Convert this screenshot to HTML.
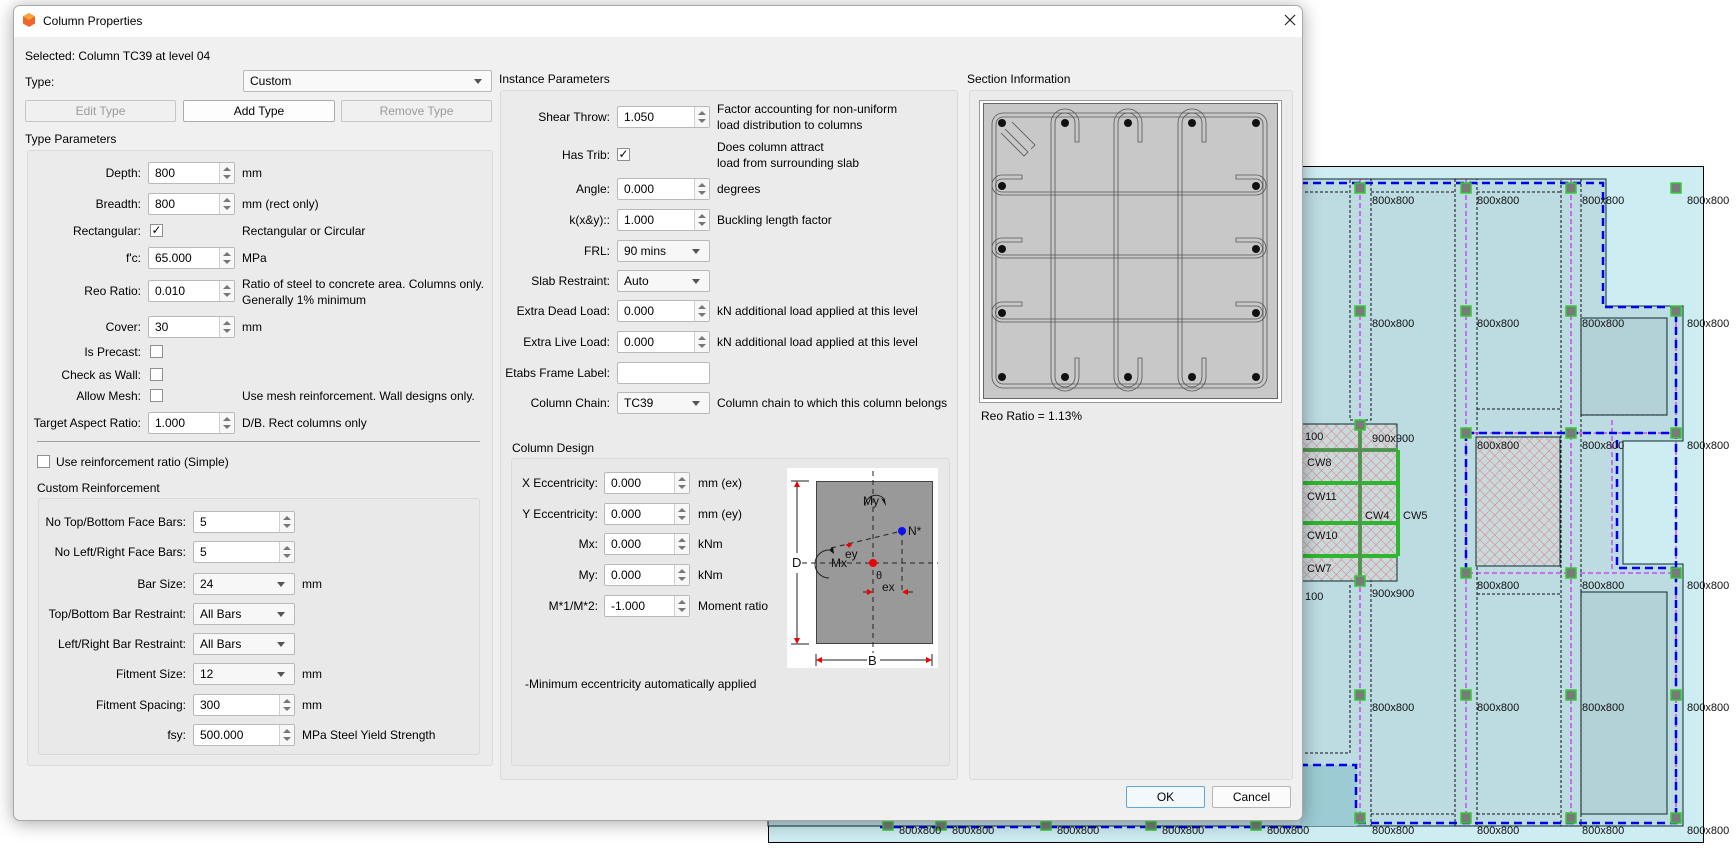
<!DOCTYPE html>
<html><head><meta charset="utf-8">
<style>
*{margin:0;padding:0;box-sizing:border-box}
body{width:1736px;height:855px;background:#fff;position:relative;overflow:hidden;font:12px "Liberation Sans",sans-serif;color:#000}
.a{position:absolute}
.l{position:absolute;font:12px "Liberation Sans",sans-serif;line-height:16px;white-space:nowrap}
.rt{text-align:right}
.sp{position:absolute;height:22px;border:1px solid #b9b9b9;background:#fff;border-radius:2px;line-height:20px;padding-left:6px;font-size:12px}
.sp i{position:absolute;right:0;top:0;bottom:0;width:15px;border-left:1px solid #d0d0d0;background:#f7f7f7}
.sp i:before,.sp i:after{content:"";position:absolute;left:3px;border-left:4px solid transparent;border-right:4px solid transparent}
.sp i:before{top:4px;border-bottom:4px solid #777}
.sp i:after{bottom:4px;border-top:4px solid #777}
.cb{position:absolute;height:22px;border:1px solid #b9b9b9;background:#f7f7f7;border-radius:2px;line-height:20px;padding-left:6px}
.cb:after{content:"";position:absolute;right:9px;top:8px;border-left:4px solid transparent;border-right:4px solid transparent;border-top:5px solid #555}
.ck{position:absolute;width:13px;height:13px;border:1px solid #8f8f8f;background:#fff;font-size:12px;line-height:11px;text-align:center}
.btn{position:absolute;height:22px;border:1px solid #c5c5c5;border-radius:2px;background:#f0f0f0;text-align:center;line-height:20px;color:#9a9a9a}
.gb{position:absolute;border:1px solid #dadada;border-radius:3px;background:#ebebeb}
</style></head><body>

<svg class="a" style="left:0;top:0" width="1736" height="855">
<defs>
<pattern id="h" width="7" height="7" patternUnits="userSpaceOnUse" patternTransform="rotate(45)">
<rect width="7" height="7" fill="#c9d9dc"/>
<line x1="0" y1="0" x2="0" y2="7" stroke="#d98080" stroke-width="1"/>
<line x1="0" y1="0" x2="7" y2="0" stroke="#d98080" stroke-width="1"/>
</pattern>
</defs>
<rect x="768.5" y="166.5" width="935" height="676" fill="#cdedf3" stroke="#000"/>
<polygon points="768,179 1606,179 1606,306 1683,306 1683,441 1623,441 1623,564 1683,564 1683,826 768,826" fill="#bcdce2" stroke="#0b2b2b"/>
<rect x="1581" y="318" width="86" height="97" fill="#b2d2d8" stroke="#0b2b2b"/>
<rect x="1581" y="592" width="86" height="222" fill="#b2d2d8" stroke="#0b2b2b"/>
<rect x="1300" y="765" width="57" height="61" fill="#9ccbd3"/>
<g fill="none" stroke="#111" stroke-dasharray="3,2" stroke-width="1">
<rect x="1350" y="179" width="21" height="241"/>
<rect x="1455" y="179" width="22" height="647"/>
<rect x="1561" y="179" width="20" height="647"/>
<line x1="1300" y1="192" x2="1350" y2="192"/>
<line x1="1371" y1="192" x2="1455" y2="192"/>
<line x1="1477" y1="192" x2="1561" y2="192"/>
<line x1="1477" y1="409" x2="1561" y2="409"/>
<line x1="1581" y1="415" x2="1667" y2="415"/>
<line x1="1350" y1="585" x2="1350" y2="755"/>
<line x1="1371" y1="814" x2="1455" y2="814"/>
<line x1="1477" y1="814" x2="1561" y2="814"/>
<line x1="1477" y1="594" x2="1561" y2="594"/>
<line x1="1300" y1="753" x2="1350" y2="753"/>
<line x1="1371" y1="579" x2="1371" y2="826"/>
</g>
<g stroke="#d400ff" stroke-dasharray="5,3" fill="none">
<line x1="1360" y1="179" x2="1360" y2="826"/>
<line x1="1466" y1="179" x2="1466" y2="826"/>
<line x1="1571" y1="179" x2="1571" y2="826"/>
<line x1="1676" y1="306" x2="1676" y2="826"/>
<line x1="1466" y1="433" x2="1676" y2="433"/>
<line x1="1460" y1="573" x2="1676" y2="573"/>
<line x1="1612" y1="420" x2="1612" y2="572"/>
</g>
<g stroke="#0000ee" stroke-width="2.5" stroke-dasharray="8,5" fill="none">
<polyline points="1300,183 1603,183 1603,307 1676,307 1676,823 1356,823"/>
<polyline points="1466,433 1676,433"/>
<polyline points="1466,433 1466,573"/>
<polyline points="1617,440 1617,568 1676,568"/>
<polyline points="1300,765 1356,765 1356,823"/>
<line x1="880" y1="827" x2="1302" y2="827"/>
</g>
<rect x="1300" y="424" width="97" height="157" fill="url(#h)" stroke="#0b2b2b"/>
<rect x="1476" y="437" width="84" height="129" fill="url(#h)" stroke="#0b2b2b"/>
<g stroke="#2fb52f" stroke-width="4" fill="none">
<line x1="1360" y1="425" x2="1360" y2="581"/>
<line x1="1300" y1="450" x2="1398" y2="450"/>
<line x1="1300" y1="483" x2="1398" y2="483"/>
<line x1="1300" y1="523" x2="1398" y2="523"/>
<line x1="1398" y1="450" x2="1398" y2="556"/>
<line x1="1300" y1="556" x2="1398" y2="556"/>
</g>
<g stroke="#777" stroke-width="2" fill="none">
<line x1="1360" y1="425" x2="1360" y2="581"/>
<line x1="1300" y1="450" x2="1396" y2="450"/>
</g>
<g fill="#7a7a7a" stroke="#33cc33" stroke-width="1.5">
<rect x="1355" y="183" width="10" height="10"/><rect x="1461" y="183" width="10" height="10"/><rect x="1566" y="183" width="10" height="10"/><rect x="1671" y="183" width="10" height="10"/>
<rect x="1355" y="306" width="10" height="10"/><rect x="1461" y="306" width="10" height="10"/><rect x="1566" y="306" width="10" height="10"/><rect x="1671" y="306" width="10" height="10"/>
<rect x="1355" y="420" width="10" height="10"/><rect x="1461" y="428" width="10" height="10"/><rect x="1566" y="428" width="10" height="10"/><rect x="1671" y="428" width="10" height="10"/>
<rect x="1355" y="576" width="10" height="10"/><rect x="1461" y="568" width="10" height="10"/><rect x="1566" y="568" width="10" height="10"/><rect x="1671" y="568" width="10" height="10"/>
<rect x="1355" y="690" width="10" height="10"/><rect x="1461" y="690" width="10" height="10"/><rect x="1566" y="690" width="10" height="10"/><rect x="1671" y="690" width="10" height="10"/>
<rect x="1355" y="813" width="10" height="10"/><rect x="1461" y="813" width="10" height="10"/><rect x="1566" y="813" width="10" height="10"/><rect x="1671" y="813" width="10" height="10"/>
<rect x="883" y="822" width="10" height="8"/><rect x="936" y="822" width="10" height="8"/><rect x="1041" y="822" width="10" height="8"/><rect x="1146" y="822" width="10" height="8"/><rect x="1251" y="822" width="10" height="8"/>
</g>
<g font-family="Liberation Sans" font-size="11" fill="#111">
<text x="1372" y="204">800x800</text><text x="1477" y="204">800x800</text><text x="1582" y="204">800x800</text><text x="1687" y="204">800x800</text>
<text x="1372" y="327">800x800</text><text x="1477" y="327">800x800</text><text x="1582" y="327">800x800</text><text x="1687" y="327">800x800</text>
<text x="1372" y="442">900x900</text><text x="1477" y="449">800x800</text><text x="1582" y="449">800x800</text><text x="1687" y="449">800x800</text>
<text x="1372" y="597">900x900</text><text x="1477" y="589">800x800</text><text x="1582" y="589">800x800</text><text x="1687" y="589">800x800</text>
<text x="1372" y="711">800x800</text><text x="1477" y="711">800x800</text><text x="1582" y="711">800x800</text><text x="1687" y="711">800x800</text>
<text x="1372" y="834">800x800</text><text x="1477" y="834">800x800</text><text x="1582" y="834">800x800</text><text x="1687" y="834">800x800</text>
<text x="899" y="834">800x800</text><text x="952" y="834">800x800</text><text x="1057" y="834">800x800</text><text x="1162" y="834">800x800</text><text x="1267" y="834">800x800</text>
<text x="1305" y="440">100</text><text x="1305" y="600">100</text>
<text x="1307" y="466">CW8</text><text x="1307" y="500">CW11</text><text x="1365" y="519">CW4</text><text x="1403" y="519">CW5</text><text x="1307" y="539">CW10</text><text x="1307" y="572">CW7</text>
</g>
</svg>

<!-- dialog -->
<div class="a" style="left:13px;top:5px;width:1290px;height:816px;background:#f0f0f0;border:1px solid #a8a8a8;border-radius:7px;box-shadow:0 2px 18px rgba(0,0,0,.35);overflow:hidden">
<div class="a" style="left:0;top:0;right:0;height:31px;background:#fff"></div>
</div>
<svg class="a" style="left:21px;top:12px" width="16" height="16"><polygon points="8,1 14,4.5 14,11.5 8,15 2,11.5 2,4.5" fill="#f0662a"/><polygon points="8,1 14,4.5 8,8 2,4.5" fill="#f7a23a"/></svg>
<div class="l" style="left:43px;top:13px">Column Properties</div>
<svg class="a" style="left:1284px;top:14px" width="12" height="12"><path d="M1 1L11 11M11 1L1 11" stroke="#222" stroke-width="1.2"/></svg>

<div class="l" style="left:25px;top:48px">Selected: Column TC39 at level 04</div>
<div class="l" style="left:25px;top:74px">Type:</div>
<div class="cb" style="left:243px;top:70px;width:249px;background:#f9f9f9">Custom</div>
<div class="btn" style="left:25px;top:100px;width:151px">Edit Type</div>
<div class="btn" style="left:183px;top:100px;width:152px;color:#000;background:#fdfdfd;border-color:#adadad">Add Type</div>
<div class="btn" style="left:341px;top:100px;width:151px">Remove Type</div>
<div class="l" style="left:25px;top:131px">Type Parameters</div>

<div class="gb" style="left:27px;top:150px;width:466px;height:616px"></div>
<!-- type params -->
<div class="l rt" style="right:1595px;top:165px">Depth:</div><div class="sp" style="left:148px;top:162px;width:87px">800<i></i></div><div class="l" style="left:242px;top:165px">mm</div>
<div class="l rt" style="right:1595px;top:196px">Breadth:</div><div class="sp" style="left:148px;top:193px;width:87px">800<i></i></div><div class="l" style="left:242px;top:196px">mm (rect only)</div>
<div class="l rt" style="right:1595px;top:223px">Rectangular:</div><div class="ck" style="left:150px;top:224px">✓</div><div class="l" style="left:242px;top:223px">Rectangular or Circular</div>
<div class="l rt" style="right:1595px;top:250px">f'c:</div><div class="sp" style="left:148px;top:247px;width:87px">65.000<i></i></div><div class="l" style="left:242px;top:250px">MPa</div>
<div class="l rt" style="right:1595px;top:283px">Reo Ratio:</div><div class="sp" style="left:148px;top:280px;width:87px">0.010<i></i></div><div class="l" style="left:242px;top:276px">Ratio of steel to concrete area. Columns only.</div><div class="l" style="left:242px;top:292px">Generally 1% minimum</div>
<div class="l rt" style="right:1595px;top:319px">Cover:</div><div class="sp" style="left:148px;top:316px;width:87px">30<i></i></div><div class="l" style="left:242px;top:319px">mm</div>
<div class="l rt" style="right:1595px;top:344px">Is Precast:</div><div class="ck" style="left:150px;top:345px"></div>
<div class="l rt" style="right:1595px;top:367px">Check as Wall:</div><div class="ck" style="left:150px;top:368px"></div>
<div class="l rt" style="right:1595px;top:388px">Allow Mesh:</div><div class="ck" style="left:150px;top:389px"></div><div class="l" style="left:242px;top:388px">Use mesh reinforcement. Wall designs only.</div>
<div class="l rt" style="right:1595px;top:415px">Target Aspect Ratio:</div><div class="sp" style="left:148px;top:412px;width:87px">1.000<i></i></div><div class="l" style="left:242px;top:415px">D/B. Rect columns only</div>
<div class="a" style="left:37px;top:441px;width:443px;height:1px;background:#a0a0a0"></div>
<div class="ck" style="left:37px;top:455px"></div><div class="l" style="left:56px;top:454px">Use reinforcement ratio (Simple)</div>
<div class="l" style="left:37px;top:480px">Custom Reinforcement</div>
<div class="gb" style="left:38px;top:498px;width:442px;height:257px;background:#e9e9e9"></div>
<div class="l rt" style="right:1550px;top:514px">No Top/Bottom Face Bars:</div><div class="sp" style="left:193px;top:511px;width:102px">5<i></i></div>
<div class="l rt" style="right:1550px;top:544px">No Left/Right Face Bars:</div><div class="sp" style="left:193px;top:541px;width:102px">5<i></i></div>
<div class="l rt" style="right:1550px;top:576px">Bar Size:</div><div class="cb" style="left:193px;top:573px;width:102px">24</div><div class="l" style="left:302px;top:576px">mm</div>
<div class="l rt" style="right:1550px;top:606px">Top/Bottom Bar Restraint:</div><div class="cb" style="left:193px;top:603px;width:102px">All Bars</div>
<div class="l rt" style="right:1550px;top:636px">Left/Right Bar Restraint:</div><div class="cb" style="left:193px;top:633px;width:102px">All Bars</div>
<div class="l rt" style="right:1550px;top:666px">Fitment Size:</div><div class="cb" style="left:193px;top:663px;width:102px">12</div><div class="l" style="left:302px;top:666px">mm</div>
<div class="l rt" style="right:1550px;top:697px">Fitment Spacing:</div><div class="sp" style="left:193px;top:694px;width:102px">300<i></i></div><div class="l" style="left:302px;top:697px">mm</div>
<div class="l rt" style="right:1550px;top:727px">fsy:</div><div class="sp" style="left:193px;top:724px;width:102px">500.000<i></i></div><div class="l" style="left:302px;top:727px">MPa Steel Yield Strength</div>

<!-- instance -->
<div class="l" style="left:499px;top:71px">Instance Parameters</div>
<div class="gb" style="left:500px;top:90px;width:458px;height:690px"></div>
<div class="l rt" style="right:1126px;top:109px">Shear Throw:</div><div class="sp" style="left:617px;top:106px;width:93px">1.050<i></i></div><div class="l" style="left:717px;top:101px">Factor accounting for non-uniform</div><div class="l" style="left:717px;top:117px">load distribution to columns</div>
<div class="l rt" style="right:1126px;top:147px">Has Trib:</div><div class="ck" style="left:617px;top:148px">✓</div><div class="l" style="left:717px;top:139px">Does column attract</div><div class="l" style="left:717px;top:155px">load from surrounding slab</div>
<div class="l rt" style="right:1126px;top:181px">Angle:</div><div class="sp" style="left:617px;top:178px;width:93px">0.000<i></i></div><div class="l" style="left:717px;top:181px">degrees</div>
<div class="l rt" style="right:1126px;top:212px">k(x&amp;y)::</div><div class="sp" style="left:617px;top:209px;width:93px">1.000<i></i></div><div class="l" style="left:717px;top:212px">Buckling length factor</div>
<div class="l rt" style="right:1126px;top:243px">FRL:</div><div class="cb" style="left:617px;top:240px;width:93px">90 mins</div>
<div class="l rt" style="right:1126px;top:273px">Slab Restraint:</div><div class="cb" style="left:617px;top:270px;width:93px">Auto</div>
<div class="l rt" style="right:1126px;top:303px">Extra Dead Load:</div><div class="sp" style="left:617px;top:300px;width:93px">0.000<i></i></div><div class="l" style="left:717px;top:303px">kN additional load applied at this level</div>
<div class="l rt" style="right:1126px;top:334px">Extra Live Load:</div><div class="sp" style="left:617px;top:331px;width:93px">0.000<i></i></div><div class="l" style="left:717px;top:334px">kN additional load applied at this level</div>
<div class="l rt" style="right:1126px;top:365px">Etabs Frame Label:</div><div class="sp" style="left:617px;top:362px;width:93px"></div>
<div class="l rt" style="right:1126px;top:395px">Column Chain:</div><div class="cb" style="left:617px;top:392px;width:93px">TC39</div><div class="l" style="left:717px;top:395px">Column chain to which this column belongs</div>

<div class="l" style="left:512px;top:440px">Column Design</div>
<div class="gb" style="left:511px;top:458px;width:439px;height:308px;background:#e8e8e8"></div>
<div class="l rt" style="right:1138px;top:475px">X Eccentricity:</div><div class="sp" style="left:604px;top:472px;width:86px">0.000<i></i></div><div class="l" style="left:698px;top:475px">mm (ex)</div>
<div class="l rt" style="right:1138px;top:506px">Y Eccentricity:</div><div class="sp" style="left:604px;top:503px;width:86px">0.000<i></i></div><div class="l" style="left:698px;top:506px">mm (ey)</div>
<div class="l rt" style="right:1138px;top:536px">Mx:</div><div class="sp" style="left:604px;top:533px;width:86px">0.000<i></i></div><div class="l" style="left:698px;top:536px">kNm</div>
<div class="l rt" style="right:1138px;top:567px">My:</div><div class="sp" style="left:604px;top:564px;width:86px">0.000<i></i></div><div class="l" style="left:698px;top:567px">kNm</div>
<div class="l rt" style="right:1138px;top:598px">M*1/M*2:</div><div class="sp" style="left:604px;top:595px;width:86px">-1.000<i></i></div><div class="l" style="left:698px;top:598px">Moment ratio</div>
<div class="l" style="left:525px;top:676px">-Minimum eccentricity automatically applied</div>

<svg class="a" style="left:787px;top:468px" width="151" height="200" font-family="Liberation Sans">
<rect width="151" height="200" fill="#fff"/>
<rect x="29.5" y="13.5" width="116" height="162" fill="#999" stroke="#444"/>
<g stroke="#222" stroke-dasharray="5,4" fill="none"><line x1="86" y1="3" x2="86" y2="185"/><line x1="15" y1="95" x2="151" y2="95"/><line x1="115" y1="63" x2="115" y2="125"/><line x1="44" y1="80" x2="115" y2="63"/></g>
<g stroke="#222" fill="none"><line x1="10" y1="13" x2="10" y2="85"/><line x1="10" y1="105" x2="10" y2="175"/><line x1="4" y1="13" x2="22" y2="13"/><line x1="4" y1="176" x2="22" y2="176"/>
<line x1="29" y1="186" x2="29" y2="198"/><line x1="145" y1="186" x2="145" y2="198"/><line x1="29" y1="192" x2="80" y2="192"/><line x1="93" y1="192" x2="145" y2="192"/>
<path d="M78 38 A11 11 0 0 1 98 32"/><path d="M42 110 A14 14 0 0 1 42 82"/><line x1="76" y1="124" x2="82" y2="124"/><line x1="120" y1="124" x2="126" y2="124"/></g>
<g fill="#e00"><polygon points="10,13 7,19 13,19"/><polygon points="10,176 7,170 13,170"/><polygon points="29,192 35,189 35,195"/><polygon points="145,192 139,189 139,195"/><polygon points="62,74 59,78 65,78"/><polygon points="62,80 59,76 65,76"/><polygon points="86,124 80,121 80,127"/><polygon points="115,124 121,121 121,127"/><circle cx="86" cy="95" r="4"/></g>
<circle cx="115" cy="63" r="4" fill="#1010ee"/>
<polygon points="98,32 94,30 99,38" fill="#111"/><polygon points="42,82 46,79 47,86" fill="#111"/>
<g font-size="12" fill="#111"><text x="76" y="37">My</text><text x="121" y="67">N*</text><text x="44" y="99">Mx</text><text x="58" y="90">ey</text><text x="89" y="111" font-size="11">θ</text><text x="95" y="123">ex</text><text x="5" y="99" font-size="13">D</text><text x="81" y="197" font-size="13">B</text></g>
</svg>

<!-- section info -->
<div class="l" style="left:967px;top:71px">Section Information</div>
<div class="gb" style="left:969px;top:90px;width:324px;height:690px"></div>
<svg class="a" style="left:979px;top:100px" width="303" height="303">
<rect x="0.5" y="0.5" width="302" height="302" fill="#fff" stroke="#999"/>
<rect x="4.5" y="3.5" width="294" height="295" fill="#c8c8c8" stroke="#666"/>
<g fill="none" stroke="#555" stroke-width="0.8">
<rect x="13" y="13" width="275" height="275" rx="11"/>
<rect x="17" y="17" width="267" height="267" rx="7"/>
<path d="M76 277 V23 A10 10 0 0 1 96 23 V42 H100 V23 A14 14 0 0 0 72 23 V277 A14 14 0 0 0 100 277 V258 H96 V277 A10 10 0 0 1 76 277"/>
<path d="M139 277 V23 A10 10 0 0 1 159 23 V42 H163 V23 A14 14 0 0 0 135 23 V277 A14 14 0 0 0 163 277 V258 H159 V277 A10 10 0 0 1 139 277"/>
<path d="M203 277 V23 A10 10 0 0 1 223 23 V42 H227 V23 A14 14 0 0 0 199 23 V277 A14 14 0 0 0 227 277 V258 H223 V277 A10 10 0 0 1 203 277"/>
<path d="M277 95 H23 A10 10 0 0 1 23 75 H43 V79 H23 A6 6 0 0 0 23 92 H277 A6 6 0 0 0 277 79 H257 V75 H277 A10 10 0 0 1 277 95"/>
<path d="M277 158 H23 A10 10 0 0 1 23 138 H43 V142 H23 A6 6 0 0 0 23 155 H277 A6 6 0 0 0 277 142 H257 V138 H277 A10 10 0 0 1 277 158"/>
<path d="M277 222 H23 A10 10 0 0 1 23 202 H43 V206 H23 A6 6 0 0 0 23 219 H277 A6 6 0 0 0 277 206 H257 V202 H277 A10 10 0 0 1 277 222"/>
<path d="M22 33 L45 56 L49 52 L26 29 M33 22 L56 45 L52 49"/>
</g>
<g fill="#111">
<circle cx="23" cy="23" r="4"/><circle cx="86" cy="23" r="4"/><circle cx="149" cy="23" r="4"/><circle cx="213" cy="23" r="4"/><circle cx="277" cy="23" r="4"/>
<circle cx="23" cy="86" r="4"/><circle cx="277" cy="86" r="4"/>
<circle cx="23" cy="149" r="4"/><circle cx="277" cy="149" r="4"/>
<circle cx="23" cy="213" r="4"/><circle cx="277" cy="213" r="4"/>
<circle cx="23" cy="277" r="4"/><circle cx="86" cy="277" r="4"/><circle cx="149" cy="277" r="4"/><circle cx="213" cy="277" r="4"/><circle cx="277" cy="277" r="4"/>
</g>
</svg>
<div class="l" style="left:981px;top:408px">Reo Ratio = 1.13%</div>

<div class="btn" style="left:1126px;top:786px;width:79px;color:#000;background:#f3f8fc;border:1px solid #5ea5e0">OK</div>
<div class="btn" style="left:1212px;top:786px;width:79px;color:#000;background:#fbfbfb;border-color:#b5b5b5">Cancel</div>
</body></html>
